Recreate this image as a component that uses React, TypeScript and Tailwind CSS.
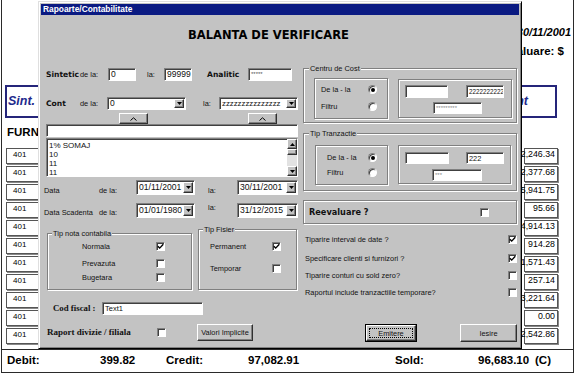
import type { ReactNode } from "react";

const sunk =
  "border border-t-[#808080] border-l-[#808080] border-b-white border-r-white shadow-[inset_1px_1px_0_#404040]";
const raised =
  "bg-[#c3c3c3] border border-t-white border-l-white border-b-[#303030] border-r-[#303030] shadow-[inset_-1px_-1px_0_#808080]";
const etched = "border border-[#808080] shadow-[inset_1px_1px_0_#fff,1px_1px_0_#fff]";

const VALUES = ["2,246.34", "2,377.68", "5,941.75", "95.66", "4,914.13", "914.28", "1,571.43", "257.14", "3,221.64", "0.00", "2,542.86"];

function Field({ className = "", children }: { className?: string; children?: ReactNode }) {
  return (
    <div className={`flex shrink-0 items-center overflow-hidden whitespace-nowrap bg-white pl-[2px] ${sunk} ${className}`}>
      {children}
    </div>
  );
}

function Combo({ className = "", textClass = "", children }: { className?: string; textClass?: string; children?: ReactNode }) {
  return (
    <div className={`flex shrink-0 items-stretch bg-white ${sunk} ${className}`}>
      <span className={`flex flex-1 items-center overflow-hidden whitespace-nowrap pl-[2px] ${textClass}`}>{children}</span>
      <span className={`my-[1px] mr-[1px] flex w-[10px] items-center justify-center ${raised}`}>
        <svg width="5" height="3" viewBox="0 0 5 3">
          <path d="M0 0h5L2.5 3z" fill="#000" />
        </svg>
      </span>
    </div>
  );
}

function Check({ on = false }: { on?: boolean }) {
  return (
    <span className={`flex h-[9px] w-[9px] shrink-0 items-center justify-center bg-white ${sunk}`}>
      {on && (
        <svg width="7" height="7" viewBox="0 0 7 7">
          <path d="M0.8 3.2l1.9 1.9 3.6-3.9" stroke="#000" strokeWidth="1.4" fill="none" />
        </svg>
      )}
    </span>
  );
}

function Radio({ on = false }: { on?: boolean }) {
  return (
    <span className={`flex h-[9px] w-[9px] shrink-0 items-center justify-center rounded-full bg-white ${sunk}`}>
      {on && <span className="h-[4px] w-[4px] rounded-full bg-black" />}
    </span>
  );
}

function Group({ label, className = "", labelClass = "", children }: { label: string; className?: string; labelClass?: string; children?: ReactNode }) {
  return (
    <div className={`flex shrink-0 flex-col ${etched} ${className}`}>
      <span className={`-mt-[5px] w-fit bg-[#c3c3c3] px-[1px] leading-[9px] ${labelClass}`}>{label}</span>
      {children}
    </div>
  );
}

function Report() {
  return (
    <div className="ml-[1px] flex h-[373px] w-[573px] flex-col border-x border-b border-[#2a2a2a]">
      <p className="mt-[26px] pr-[2px] text-right text-[11px] font-bold italic leading-[13px]">Perioada: 01/11/2001 - 30/11/2001</p>
      <p className="mt-[6px] pr-[9px] text-right text-[11.5px] font-bold leading-[13px]">Reevaluare: $</p>
      <div className="ml-[3px] mt-[27px] flex h-[33px] w-[552px] shrink-0 items-center justify-between border-2 border-[#25257a] pl-[1px] pr-[27px] text-[12.5px] font-bold italic text-[#1e2a8c]">
        <span>Sint.</span>
        <span>Cont</span>
      </div>
      <p className="ml-[5px] mt-[8px] text-[11.5px] font-bold leading-[13px]">FURNIZORI</p>
      <div className="mt-[9px] flex flex-col">
        {VALUES.map((v, i) => (
          <div key={i} className="flex h-[18px] shrink-0 items-start justify-between">
            <div className="ml-[4px] h-[16px] w-[40px] border border-[#555] pl-[6px] text-[8px] leading-[11px] shadow-[1px_1px_0_#888]">401</div>
            <div className="mr-[15px] flex h-[16px] w-[34px] justify-end whitespace-nowrap border border-[#555] pr-[2px] text-[8.8px] leading-[11px] shadow-[1px_1px_0_#888]">
              {v}
            </div>
          </div>
        ))}
      </div>
      <div className="mt-[3px] flex flex-1 items-center border-t border-[#2a2a2a] text-[11.5px] font-bold">
        <span className="ml-[5px] w-[93px] shrink-0">Debit:</span>
        <span className="w-[66px] shrink-0">399.82</span>
        <span className="w-[82px] shrink-0">Credit:</span>
        <span className="w-[147px] shrink-0">97,082.91</span>
        <span className="w-[83px] shrink-0">Sold:</span>
        <span className="w-[57px] shrink-0">96,683.10</span>
        <span>(C)</span>
      </div>
    </div>
  );
}

function LeftCol() {
  const bold = "font-['DejaVu_Sans',sans-serif] text-[7.6px] font-bold";
  return (
    <div className="flex w-[252px] shrink-0 flex-col">
      <div className="mt-[5px] flex h-[13px] items-center">
        <span className={`w-[34px] shrink-0 ${bold}`}>Sintetic</span>
        <span className="w-[28px] shrink-0">de la:</span>
        <Field className="h-[13px] w-[28px] text-[8.5px]">0</Field>
        <span className="ml-[11px] w-[17px] shrink-0">la:</span>
        <Field className="h-[13px] w-[28px] text-[8.5px]">99999</Field>
        <span className={`ml-[15px] w-[41px] shrink-0 ${bold}`}>Analitic</span>
        <Field className="h-[13px] w-[44px] text-[6px] text-[#555]">*****</Field>
      </div>

      <div className="mt-[16px] flex h-[13px] items-center">
        <span className={`w-[22px] shrink-0 ${bold}`}>Cont</span>
        <span className="ml-[12px] w-[27px] shrink-0">de la:</span>
        <Combo className="h-[13px] w-[79px]" textClass="text-[8.5px]">0</Combo>
        <span className="ml-[17px] w-[16px] shrink-0">la:</span>
        <Combo className="h-[13px] w-[79px]" textClass="text-[7.8px]">zzzzzzzzzzzzzzz</Combo>
      </div>

      <div className="mt-[3px] flex h-[11px]">
        {["ml-[73px]", "ml-[100px]"].map((m) => (
          <span key={m} className={`flex h-[11px] w-[29px] shrink-0 items-center justify-center ${raised} ${m}`}>
            <svg width="7" height="4" viewBox="0 0 7 4">
              <path d="M0.5 3.5L3.5 0.8 6.5 3.5" stroke="#000" strokeWidth="1" fill="none" />
            </svg>
          </span>
        ))}
      </div>

      <Field className="h-[13px] w-[252px]" />

      <div className={`mt-[1px] flex h-[39px] w-[252px] shrink-0 bg-white ${sunk}`}>
        <div className="flex-1 overflow-hidden pl-[2px] pt-[1.5px] text-[8px] leading-[9px]">
          <div>1% SOMAJ</div>
          <div>10</div>
          <div>11</div>
          <div>11</div>
        </div>
        <div className="flex w-[10px] shrink-0 flex-col bg-[#e2e2e2]">
          <span className={`flex h-[10px] shrink-0 items-center justify-center ${raised}`}>
            <svg width="5" height="3" viewBox="0 0 5 3">
              <path d="M0 3h5L2.5 0z" fill="#000" />
            </svg>
          </span>
          <span className={`h-[6px] shrink-0 ${raised}`} />
          <span className="flex-1" />
          <span className={`flex h-[10px] shrink-0 items-center justify-center ${raised}`}>
            <svg width="5" height="3" viewBox="0 0 5 3">
              <path d="M0 0h5L2.5 3z" fill="#000" />
            </svg>
          </span>
        </div>
      </div>

      <div className="mt-[3px] flex h-[15px] items-start">
        <span className="-ml-[2px] mt-[6px] w-[55px] shrink-0">Data</span>
        <span className="mt-[6px] w-[37px] shrink-0">de la:</span>
        <Combo className="h-[15px] w-[59px]" textClass="text-[8.6px]">01/11/2001</Combo>
        <span className="ml-[13px] mt-[6px] w-[29px] shrink-0">la:</span>
        <Combo className="h-[15px] w-[61px]" textClass="text-[8.6px]">30/11/2001</Combo>
      </div>

      <div className="mt-[8px] flex h-[15px] items-start">
        <span className="-ml-[2px] mt-[5px] w-[55px] shrink-0">Data Scadenta</span>
        <span className="mt-[5px] w-[37px] shrink-0">de la:</span>
        <Combo className="h-[15px] w-[59px]" textClass="text-[8.6px]">01/01/1980</Combo>
        <span className="ml-[13px] w-[29px] shrink-0">la:</span>
        <Combo className="h-[15px] w-[61px]" textClass="text-[8.6px]">31/12/2015</Combo>
      </div>

      <div className="mt-[11px] flex items-start">
        <Group label="Tip nota contabila" className="ml-[1px] mt-[4px] h-[57px] w-[145px]" labelClass="ml-[4px]">
          <div className="mt-[4px] flex h-[9px] items-center">
            <span className="ml-[34px] w-[74px] shrink-0">Normala</span>
            <Check on />
          </div>
          <div className="mt-[8px] flex h-[9px] items-center">
            <span className="ml-[34px] w-[74px] shrink-0">Prevazuta</span>
            <Check />
          </div>
          <div className="mt-[5px] flex h-[9px] items-center">
            <span className="ml-[34px] w-[74px] shrink-0">Bugetara</span>
            <Check />
          </div>
        </Group>
        <Group label="Tip Fisier" className="ml-[6px] h-[61px] w-[99px]" labelClass="ml-[4px]">
          <div className="mt-[8px] flex h-[9px] items-center">
            <span className="ml-[11px] w-[62px] shrink-0">Permanent</span>
            <Check on />
          </div>
          <div className="mt-[13px] flex h-[9px] items-center">
            <span className="ml-[11px] w-[62px] shrink-0">Temporar</span>
            <Check />
          </div>
        </Group>
      </div>

      <div className="mt-[12px] flex h-[13px] items-center">
        <span className="ml-[7px] w-[49px] shrink-0 font-['Liberation_Serif',serif] text-[8.8px] font-bold">Cod fiscal :</span>
        <Field className="h-[13px] w-[101px] text-[7.5px]">Text1</Field>
      </div>

      <div className="mt-[9px] flex h-[17px] items-center">
        <span className="ml-[1px] w-[110px] shrink-0 font-['Liberation_Serif',serif] text-[9px] font-bold">Raport divizie / filiala</span>
        <Check />
        <span className={`ml-[31px] flex h-[17px] w-[56px] shrink-0 items-center justify-center ${raised}`}>Valori Implicite</span>
      </div>
    </div>
  );
}

function RightCol() {
  const opts = [
    { t: "Tiparire interval de date ?", on: true, m: "mt-[11px]" },
    { t: "Specificare clienti si furnizori ?", on: true, m: "mt-[10px]" },
    { t: "Tiparire conturi cu sold zero?", on: false, m: "mt-[8px]" },
    { t: "Raportul include tranzactiile temporare?", on: false, m: "mt-[8px]" },
  ];
  return (
    <div className="flex w-[214px] shrink-0 flex-col">
      <Group label="Centru de Cost" className="mt-[5px] h-[55px]" labelClass="ml-[5px]">
        <div className="mt-[5px] flex items-start">
          <div className={`ml-[10px] flex h-[41px] w-[74px] shrink-0 flex-col ${etched}`}>
            <div className="mt-[6px] flex h-[9px] items-center">
              <span className="ml-[6px] w-[47px] shrink-0">De la - la</span>
              <Radio on />
            </div>
            <div className="mt-[8px] flex h-[9px] items-center">
              <span className="ml-[6px] w-[47px] shrink-0">Filtru</span>
              <Radio />
            </div>
          </div>
          <div className={`ml-[10px] mt-[1px] flex h-[39px] w-[114px] shrink-0 flex-col ${etched}`}>
            <div className="mt-[5px] flex">
              <Field className="ml-[6px] h-[13px] w-[43px]" />
              <Field className="ml-[18px] h-[13px] w-[38px] text-[6.3px]">2222222222</Field>
            </div>
            <div className="mt-[4px] flex">
              <Field className="ml-[34px] h-[12px] w-[49px] text-[6px] text-[#8a8a8a]">*********</Field>
            </div>
          </div>
        </div>
      </Group>

      <Group label="Tip Tranzactie" className="mt-[10px] h-[58px]" labelClass="ml-[5px]">
        <div className="mt-[7px] flex items-start">
          <div className={`ml-[11px] flex h-[40px] w-[73px] shrink-0 flex-col ${etched}`}>
            <div className="mt-[7px] flex h-[9px] items-center">
              <span className="ml-[11px] w-[41px] shrink-0">De la - la</span>
              <Radio on />
            </div>
            <div className="mt-[6px] flex h-[9px] items-center">
              <span className="ml-[11px] w-[41px] shrink-0">Filtru</span>
              <Radio />
            </div>
          </div>
          <div className={`ml-[10px] flex h-[39px] w-[113px] shrink-0 flex-col ${etched}`}>
            <div className="mt-[6px] flex">
              <Field className="ml-[6px] h-[12px] w-[44px]" />
              <Field className="ml-[17px] h-[12px] w-[38px] text-[7.4px]">222</Field>
            </div>
            <div className="mt-[5px] flex">
              <Field className="ml-[33px] h-[12px] w-[50px] text-[6px] text-[#8a8a8a]">***</Field>
            </div>
          </div>
        </div>
      </Group>

      <div className={`mt-[9px] flex h-[24px] shrink-0 items-center ${etched}`}>
        <span className="ml-[5px] w-[171px] shrink-0 font-['DejaVu_Sans',sans-serif] text-[8.2px] font-bold">Reevaluare ?</span>
        <Check />
      </div>

      {opts.map((o) => (
        <div key={o.t} className={`flex h-[9px] items-center justify-between pl-[2px] ${o.m}`}>
          <span>{o.t}</span>
          <Check on={o.on} />
        </div>
      ))}

      <div className="mt-[27px] flex h-[18px]">
        <div className="ml-[62px] flex h-[18px] w-[52px] shrink-0 border border-black">
          <div className={`flex flex-1 p-[2px] ${raised}`}>
            <span className="flex flex-1 items-center justify-center border border-dotted border-black">Emitere</span>
          </div>
        </div>
        <span className={`ml-[43px] flex h-[18px] w-[57px] shrink-0 items-center justify-center ${raised}`}>Iesire</span>
      </div>
    </div>
  );
}

export default function App() {
  return (
    <div className="relative h-[375px] w-[576px] overflow-hidden bg-white font-['Liberation_Sans',Arial,sans-serif] text-black">
      <Report />
      <div className="absolute left-[38px] top-[1px] flex h-[348px] w-[484px] flex-col border border-t-[#dfdfdf] border-l-[#dfdfdf] border-b-black border-r-black bg-[#c3c3c3] p-[2px] text-[7.4px] leading-[9px] text-[#111] shadow-[inset_1px_1px_0_#fff,inset_-1px_-1px_0_#808080]">
        <div className="flex h-[11px] shrink-0 items-center bg-[#0a1a82] pl-[2px] text-[8.4px] font-bold leading-none text-white">
          Rapoarte/Contabilitate
        </div>
        <div className="flex flex-1 flex-col pl-[5px] pr-[2px]">
          <h1 className="mt-[13px] pl-[142px] font-['DejaVu_Sans',sans-serif] text-[11.5px] font-bold leading-[14px] text-black">
            BALANTA DE VERIFICARE
          </h1>
          <div className="mt-[21px] flex gap-[5px]">
            <LeftCol />
            <RightCol />
          </div>
        </div>
      </div>
    </div>
  );
}
